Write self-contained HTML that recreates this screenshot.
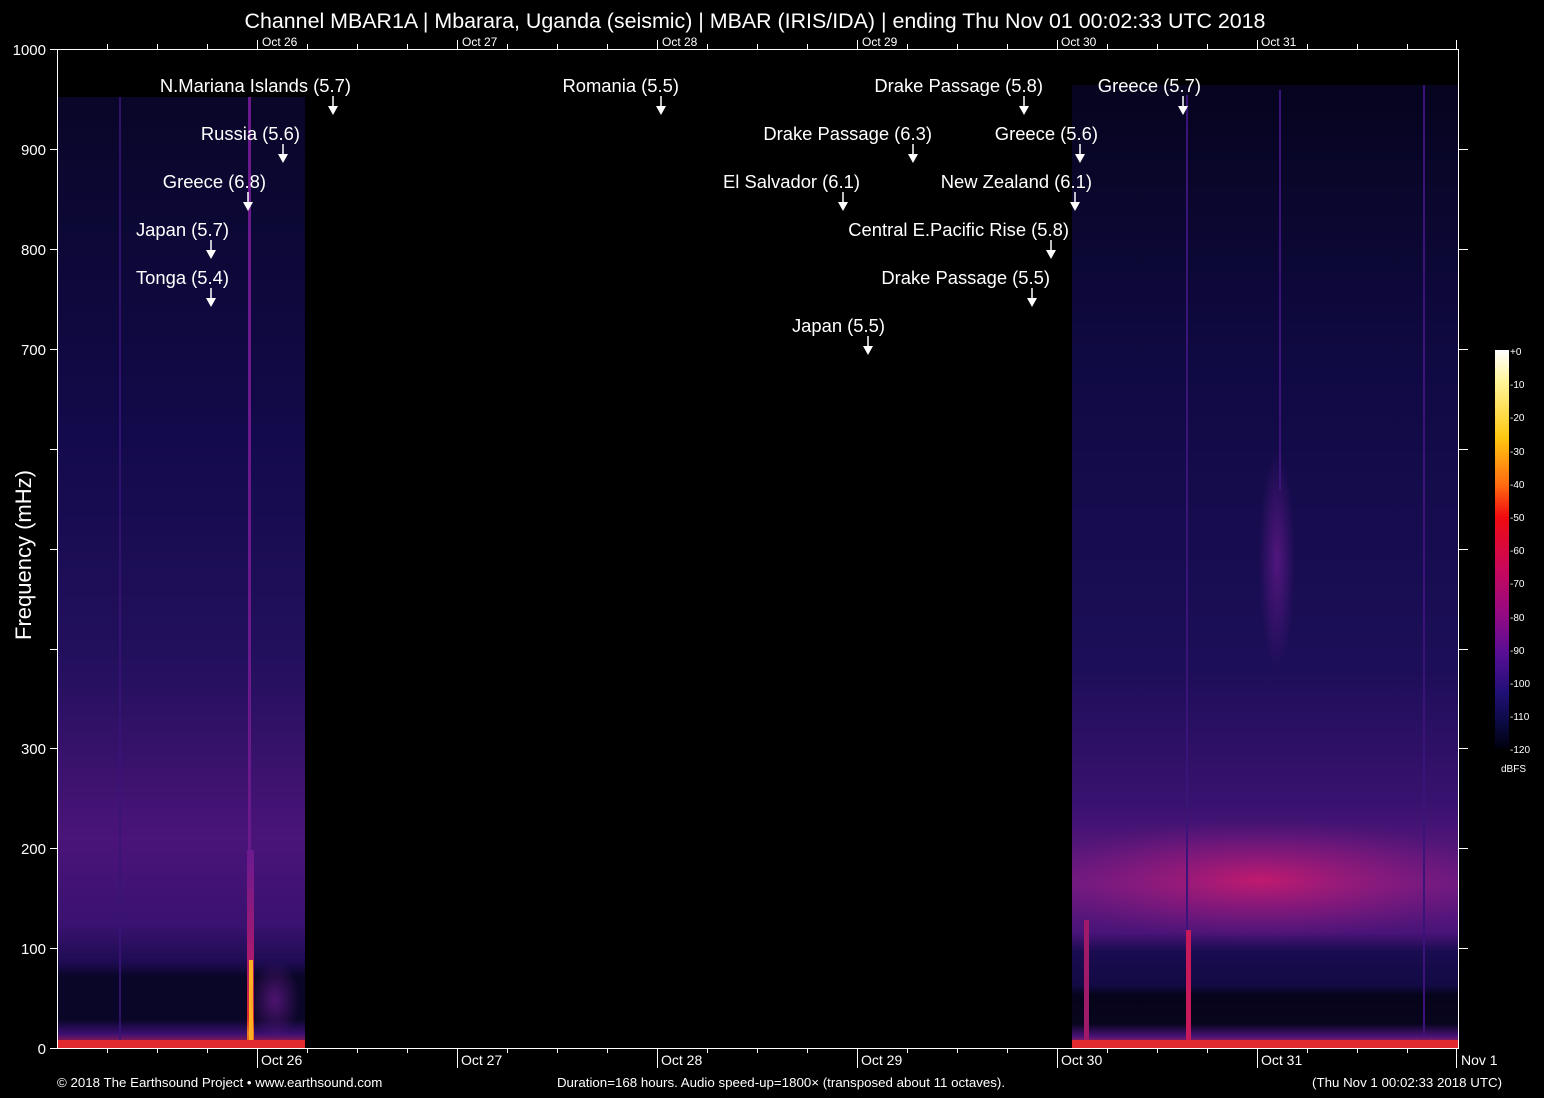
<!DOCTYPE html>
<html><head><meta charset="utf-8"><style>
html,body{margin:0;padding:0;background:#000;width:1544px;height:1098px;overflow:hidden}
svg{display:block}
text{font-family:"Liberation Sans",sans-serif;fill:#fff}
</style></head><body>
<svg width="1544" height="1098" viewBox="0 0 1544 1098" xmlns="http://www.w3.org/2000/svg">
<defs>
<clipPath id="cR"><rect x="1072" y="85" width="386" height="963"/></clipPath>
<clipPath id="cL"><rect x="58" y="97" width="247" height="951"/></clipPath>
<linearGradient id="vL" x1="0" y1="0" x2="0" y2="1">
<stop offset="0" stop-color="#090628"/>
<stop offset="0.35" stop-color="#120a4a"/>
<stop offset="0.6" stop-color="#24105e"/>
<stop offset="0.78" stop-color="#4a1478"/>
<stop offset="0.87" stop-color="#3a1270"/>
<stop offset="0.91" stop-color="#1e0c52"/>
<stop offset="0.925" stop-color="#0a0628"/>
<stop offset="0.97" stop-color="#0a0628"/>
<stop offset="0.985" stop-color="#3a1070"/>
<stop offset="1" stop-color="#d02040"/>
</linearGradient>
<linearGradient id="vR" x1="0" y1="0" x2="0" y2="1">
<stop offset="0" stop-color="#06041e"/>
<stop offset="0.3" stop-color="#100a44"/>
<stop offset="0.6" stop-color="#1c0e58"/>
<stop offset="0.75" stop-color="#3a1270"/>
<stop offset="0.83" stop-color="#6a1a82"/>
<stop offset="0.88" stop-color="#4a1478"/>
<stop offset="0.9" stop-color="#1a0c50"/>
<stop offset="0.935" stop-color="#120a44"/>
<stop offset="0.945" stop-color="#06041a"/>
<stop offset="0.975" stop-color="#08051e"/>
<stop offset="0.988" stop-color="#4a1278"/>
<stop offset="1" stop-color="#e03030"/>
</linearGradient>
<radialGradient id="blob" cx="0.5" cy="0.5" r="0.5">
<stop offset="0" stop-color="#d01a6a" stop-opacity="0.85"/>
<stop offset="0.6" stop-color="#a01a7a" stop-opacity="0.4"/>
<stop offset="1" stop-color="#80187a" stop-opacity="0"/>
</radialGradient>
<radialGradient id="blob2" cx="0.5" cy="0.5" r="0.5">
<stop offset="0" stop-color="#6a1a90" stop-opacity="0.7"/>
<stop offset="1" stop-color="#6a1a90" stop-opacity="0"/>
</radialGradient>
<linearGradient id="ev" x1="0" y1="0" x2="0" y2="1">
<stop offset="0" stop-color="#6a1a90"/>
<stop offset="0.6" stop-color="#b01a6a"/>
<stop offset="0.85" stop-color="#e02a30"/>
<stop offset="0.93" stop-color="#f08020"/>
<stop offset="1" stop-color="#e04020"/>
</linearGradient>
<linearGradient id="cb" x1="0" y1="0" x2="0" y2="1">
<stop offset="0" stop-color="#ffffff"/>
<stop offset="0.08" stop-color="#fff59a"/>
<stop offset="0.22" stop-color="#ffc810"/>
<stop offset="0.34" stop-color="#ff6a10"/>
<stop offset="0.42" stop-color="#f00a10"/>
<stop offset="0.55" stop-color="#c8085a"/>
<stop offset="0.66" stop-color="#960a82"/>
<stop offset="0.76" stop-color="#5a0e96"/>
<stop offset="0.86" stop-color="#201076"/>
<stop offset="0.94" stop-color="#0a0a40"/>
<stop offset="1" stop-color="#000010"/>
</linearGradient>
</defs>

<!-- left data -->
<g clip-path="url(#cL)">
<rect x="58" y="97" width="247" height="951" fill="url(#vL)"/>
<rect x="119" y="85" width="2" height="963" fill="#3a1478" opacity="0.8"/>
<rect x="248" y="90" width="3" height="800" fill="#6a1a8a"/>
<rect x="247" y="850" width="7" height="198" fill="url(#ev)"/>
<rect x="249" y="960" width="4" height="80" fill="#ffb020"/>
<ellipse cx="275" cy="1000" rx="25" ry="40" fill="url(#blob2)"/>
<rect x="58" y="1040" width="247" height="8" fill="#e02a30"/>
</g>
<!-- right data -->
<g clip-path="url(#cR)">
<rect x="1072" y="85" width="386" height="963" fill="url(#vR)"/>
<ellipse cx="1260" cy="880" rx="240" ry="60" fill="url(#blob)"/>
<ellipse cx="1277" cy="560" rx="18" ry="110" fill="url(#blob2)"/>
<rect x="1186" y="95" width="2" height="940" fill="#3a1478"/>
<rect x="1279" y="90" width="2" height="400" fill="#3a1478"/>
<rect x="1423" y="85" width="2" height="950" fill="#3a1478"/>
<rect x="1084" y="920" width="5" height="120" fill="#a01a6a"/>
<rect x="1186" y="930" width="5" height="110" fill="#c81a5a"/>
<rect x="1072" y="1040" width="386" height="8" fill="#e02a30"/>
</g>

<!-- axes -->
<g stroke="#fff" stroke-width="1" fill="none">
<path d="M57.5 49v999.5M1458.5 49v999.5M57 49.5h1402M57 1048.5h1402"/>
<path d="M50 49.5h8M50 149.5h8M50 249.5h8M50 349.5h8M50 449.5h8M50 549.5h8M50 649.5h8M50 748.5h8M50 848.5h8M50 948.5h8M50 1048.5h8"/>
<path d="M1458 149.5h10M1458 249.5h10M1458 349.5h10M1458 449.5h10M1458 549.5h10M1458 649.5h10M1458 748.5h10M1458 848.5h10M1458 948.5h10"/>
<path d="M107.5 49v-5M157.5 49v-5M207.5 49v-5M307.5 49v-5M357.5 49v-5M407.5 49v-5M507.5 49v-5M557.5 49v-5M607.5 49v-5M707.5 49v-5M757.5 49v-5M807.5 49v-5M907.5 49v-5M957.5 49v-5M1007.5 49v-5M1107.5 49v-5M1157.5 49v-5M1207.5 49v-5M1307.5 49v-5M1357.5 49v-5M1407.5 49v-5"/>
<path d="M257.5 49v-9M457.5 49v-9M657.5 49v-9M857.5 49v-9M1057.5 49v-9M1257.5 49v-9M1456.5 49v-9"/>
<path d="M107.5 1048v5M157.5 1048v5M207.5 1048v5M307.5 1048v5M357.5 1048v5M407.5 1048v5M507.5 1048v5M557.5 1048v5M607.5 1048v5M707.5 1048v5M757.5 1048v5M807.5 1048v5M907.5 1048v5M957.5 1048v5M1007.5 1048v5M1107.5 1048v5M1157.5 1048v5M1207.5 1048v5M1307.5 1048v5M1357.5 1048v5M1407.5 1048v5"/>
<path d="M257.5 1048v20M457.5 1048v20M657.5 1048v20M857.5 1048v20M1057.5 1048v20M1257.5 1048v20M1456.5 1048v20"/>
</g>

<text x="755" y="28" font-size="21.4" text-anchor="middle">Channel MBAR1A | Mbarara, Uganda (seismic) | MBAR (IRIS/IDA) | ending Thu Nov 01 00:02:33 UTC 2018</text>
<g font-size="12">
<text x="262" y="46">Oct 26</text><text x="462" y="46">Oct 27</text><text x="662" y="46">Oct 28</text><text x="862" y="46">Oct 29</text><text x="1061" y="46">Oct 30</text><text x="1261" y="46">Oct 31</text>
</g>
<g font-size="14">
<text x="261" y="1065">Oct 26</text><text x="461" y="1065">Oct 27</text><text x="661" y="1065">Oct 28</text><text x="861" y="1065">Oct 29</text><text x="1061" y="1065">Oct 30</text><text x="1261" y="1065">Oct 31</text><text x="1461" y="1065">Nov  1</text>
</g>
<g font-size="15" text-anchor="end">
<text x="46" y="55">1000</text><text x="46" y="155">900</text><text x="46" y="255">800</text><text x="46" y="355">700</text><text x="46" y="754">300</text><text x="46" y="854">200</text><text x="46" y="954">100</text><text x="46" y="1054">0</text>
</g>
<text transform="translate(31 555) rotate(-90)" font-size="22" text-anchor="middle">Frequency (mHz)</text>

<!-- colorbar -->
<rect x="1495" y="350" width="14" height="398" fill="url(#cb)"/>
<g font-size="10" fill="#ddd">
<text x="1510" y="355">+0</text><text x="1510" y="388">-10</text><text x="1510" y="421">-20</text><text x="1510" y="455">-30</text><text x="1510" y="488">-40</text><text x="1510" y="521">-50</text><text x="1510" y="554">-60</text><text x="1510" y="587">-70</text><text x="1510" y="621">-80</text><text x="1510" y="654">-90</text><text x="1510" y="687">-100</text><text x="1510" y="720">-110</text><text x="1510" y="753">-120</text><text x="1501" y="772">dBFS</text>
</g>

<!-- labels -->
<g font-size="18.4" text-anchor="end">
<text x="351" y="92">N.Mariana Islands (5.7)</text>
<text x="300" y="140">Russia (5.6)</text>
<text x="266" y="188">Greece (6.8)</text>
<text x="229" y="236">Japan (5.7)</text>
<text x="229" y="284">Tonga (5.4)</text>
<text x="679" y="92">Romania (5.5)</text>
<text x="1043" y="92">Drake Passage (5.8)</text>
<text x="1201" y="92">Greece (5.7)</text>
<text x="932" y="140">Drake Passage (6.3)</text>
<text x="1098" y="140">Greece (5.6)</text>
<text x="860" y="188">El Salvador (6.1)</text>
<text x="1092" y="188">New Zealand (6.1)</text>
<text x="1069" y="236">Central E.Pacific Rise (5.8)</text>
<text x="1050" y="284">Drake Passage (5.5)</text>
<text x="885" y="332">Japan (5.5)</text>
</g>
<g fill="#fff" stroke="#fff" stroke-width="1.5">
<path d="M333 96v10M661 96v10M1024 96v10M1183 96v10M283 144v10M913 144v10M1080 144v10M248 192v10M843 192v10M1075 192v10M211 240v10M1051 240v10M211 288v10M1032 288v10M868 336v10"/>
</g>
<g fill="#fff">
<path d="M328 106h10l-5 9zM656 106h10l-5 9zM1019 106h10l-5 9zM1178 106h10l-5 9zM278 154h10l-5 9zM908 154h10l-5 9zM1075 154h10l-5 9zM243 202h10l-5 9zM838 202h10l-5 9zM1070 202h10l-5 9zM206 250h10l-5 9zM1046 250h10l-5 9zM206 298h10l-5 9zM1027 298h10l-5 9zM863 346h10l-5 9z"/>
</g>

<g font-size="13.3">
<text x="57" y="1087">© 2018 The Earthsound Project • www.earthsound.com</text>
<text x="781" y="1087" text-anchor="middle">Duration=168 hours. Audio speed-up=1800× (transposed about 11 octaves).</text>
<text x="1502" y="1087" text-anchor="end">(Thu Nov  1 00:02:33 2018 UTC)</text>
</g>
</svg>
</body></html>
